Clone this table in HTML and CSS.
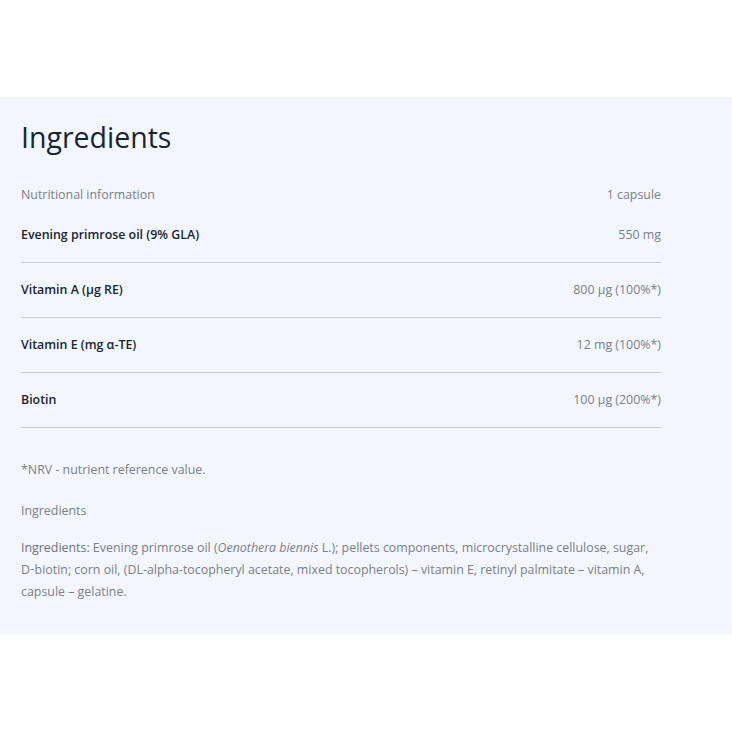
FILE: index.html
```html
<!DOCTYPE html>
<html lang="en">
<head>
  <meta charset="utf-8" />
  <meta name="viewport" content="width=device-width,initial-scale=1" />
  <title>Ingredients</title>
  <link rel="stylesheet" href="styles.css">
</head>
<body>
  <div class="top-space"></div>

  <section class="ingredients">
    <h2>Ingredients</h2>

    <div class="nutri-table">
      <div class="nutri-head">
        <span>Nutritional information</span>
        <span>1 capsule</span>
      </div>
      <div class="nutri-row">
        <span class="name">Evening primrose oil (9% GLA)</span>
        <span class="value">550 mg</span>
      </div>
      <div class="nutri-row">
        <span class="name">Vitamin A (µg RE)</span>
        <span class="value">800 µg (100%*)</span>
      </div>
      <div class="nutri-row">
        <span class="name">Vitamin E (mg α-TE)</span>
        <span class="value">12 mg (100%*)</span>
      </div>
      <div class="nutri-row">
        <span class="name">Biotin</span>
        <span class="value">100 µg (200%*)</span>
      </div>
    </div>

    <p class="note">*NRV - nutrient reference value.</p>
    <p class="sub-title">Ingredients</p>
    <p class="composition"><span class="lead">Ingredients:</span> Evening primrose oil (<em>Oenothera biennis</em> L.); pellets components, microcrystalline cellulose, sugar, D&#8209;biotin; corn oil, (DL-alpha-tocopheryl acetate, mixed tocopherols) – vitamin E, retinyl palmitate – vitamin A, capsule – gelatine.</p>
  </section>

  <div class="bottom-space"></div>
</body>
</html>
```

FILE: styles.css
```css
:root{
  --panel-bg:#f3f6fc;
  --text-dark:#172634;
  --text-muted:#7a808a;
  --line:#c9ced6;
  --table-width:640px;
}

html,body{height:100%}
body{
  margin:0;
  background:#fff;
  font-family:"Open Sans",Lato,Arial,sans-serif;
  font-size:12.4px;
  color:var(--text-muted);
}

.top-space{height:97px;}
.bottom-space{height:98px;}

.ingredients{
  background:var(--panel-bg);
  padding:23px 21px 32px;
}

.ingredients h2{
  margin:0 0 28px;
  font-size:28.5px;
  line-height:34px;
  font-weight:400;
  color:var(--text-dark);
}

.nutri-table{ width:var(--table-width); }

.nutri-head{
  display:flex; justify-content:space-between;
  line-height:26px;
}

.nutri-row{
  display:flex; justify-content:space-between; align-items:center;
  padding:20px 0;
  line-height:14px;
  border-bottom:1px solid var(--line);
}
.nutri-row .name{ color:var(--text-dark); font-weight:600; }
.nutri-row .value{ color:var(--text-muted); }

.note{ margin:31px 0 0; line-height:22px; }
.sub-title{ margin:19px 0 0; line-height:22px; }
.composition{
  margin:15px 0 0;
  width:650px;
  line-height:22px;
}
.composition .lead{ color:#6c737d; }
```
